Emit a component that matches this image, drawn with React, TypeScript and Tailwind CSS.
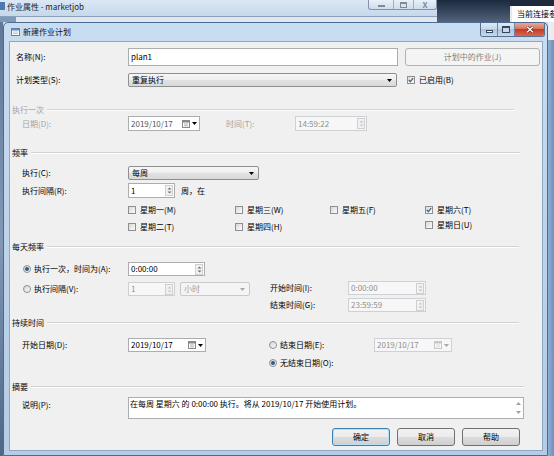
import React from 'react';

const dis = 'text-[#a3a3a3]';

function Caret({ disabled }: { disabled?: boolean }) {
  return (
    <svg width="5" height="3" viewBox="0 0 5 3" className="shrink-0">
      <path d="M0 0H5L2.5 3Z" fill={disabled ? '#a8a8a8' : '#000'} />
    </svg>
  );
}

function Spin({ disabled }: { disabled?: boolean }) {
  const c = disabled ? '#c4c4c4' : '#6f6f6f';
  return (
    <div className="ml-auto mr-[1px] flex h-[11px] w-[8px] shrink-0 items-center justify-center border border-[#cfcfcf] bg-[#f2f2f2]">
      <svg width="5" height="9" viewBox="0 0 5 9">
        <path d="M2.5 1.5L4.5 3.5H0.5Z" fill={c} />
        <path d="M2.5 7.5L4.5 5.5H0.5Z" fill={c} />
      </svg>
    </div>
  );
}

function Cal({ disabled }: { disabled?: boolean }) {
  const c = disabled ? '#c8c8c8' : '#8a8a8a';
  return (
    <div className="ml-auto mr-[2px] flex shrink-0 items-center gap-[2px]">
      <svg width="8" height="8" viewBox="0 0 8 8">
        <rect x="0.5" y="0.5" width="7" height="7" fill="#fafafa" stroke={c} />
        <rect x="1" y="1" width="6" height="1.5" fill={c} />
        <path d="M2 4H6M2 5.8H6" stroke={c} strokeWidth="0.6" />
      </svg>
      <Caret disabled={disabled} />
    </div>
  );
}

function Field({
  cls,
  value,
  disabled,
  spin,
  cal,
}: {
  cls: string;
  value: string;
  disabled?: boolean;
  spin?: boolean;
  cal?: boolean;
}) {
  return (
    <div
      className={`flex items-center border pl-[2px] ${
        disabled ? 'border-[#cdd0d4] bg-[#f7f7f7] text-[#8f8f8f]' : 'border-[#abadb3] bg-white'
      } ${cls}`}
    >
      <span>{value}</span>
      {spin && <Spin disabled={disabled} />}
      {cal && <Cal disabled={disabled} />}
    </div>
  );
}

function Combo({ cls, value, disabled }: { cls: string; value: string; disabled?: boolean }) {
  return (
    <div
      className={`flex items-center justify-between rounded-[2px] border pl-[3px] pr-[4px] ${
        disabled
          ? 'border-[#c9c9c9] bg-[#f4f4f4] text-[#a0a0a0]'
          : 'border-[#8e8f8f] bg-[linear-gradient(#f6f6f6,#eeeeee_50%,#e2e2e2_50%,#d9d9d9)]'
      } ${cls}`}
    >
      <span>{value}</span>
      <Caret disabled={disabled} />
    </div>
  );
}

function Check({ label, checked }: { label: string; checked?: boolean }) {
  return (
    <div className="flex items-center">
      <div className="flex h-[8px] w-[8px] shrink-0 items-center justify-center border border-[#8f8f8f] bg-linear-to-br from-[#d9d9d9] to-[#fbfbfb]">
        {checked && (
          <svg width="6" height="6" viewBox="0 0 6 6">
            <path d="M0.8 3L2.4 4.6L5.2 1.2" stroke="#3a5a84" strokeWidth="1.2" fill="none" />
          </svg>
        )}
      </div>
      <span className="ml-[4px]">{label}</span>
    </div>
  );
}

function Radio({ label, checked }: { label: string; checked?: boolean }) {
  return (
    <div className="flex items-center">
      <div className="flex h-[8px] w-[8px] shrink-0 items-center justify-center rounded-full border border-[#8f8f8f] bg-linear-to-br from-[#d6d6d6] to-[#fafafa]">
        {checked && <div className="h-[4px] w-[4px] rounded-full bg-[#2c5d88]" />}
      </div>
      <span className="ml-[3px]">{label}</span>
    </div>
  );
}

function Hdr({ title, disabled, mr }: { title: string; disabled?: boolean; mr: string }) {
  return (
    <div className="flex h-[10px] items-center pl-[2px]">
      <span className={disabled ? dis : ''}>{title}</span>
      <div className={`ml-[3px] h-[2px] flex-1 border-y border-t-[#cfd3d7] border-b-white ${mr}`} />
    </div>
  );
}

function Btn({ children, def }: { children: React.ReactNode; def?: boolean }) {
  return (
    <div
      className={`flex h-[18px] w-[58px] items-center justify-center rounded-[3px] border bg-[linear-gradient(#f2f2f2,#ebebeb_50%,#dddddd_50%,#cfcfcf)] ${
        def ? 'border-[#3c7fb1] shadow-[inset_0_0_0_1px_#b5e1fb]' : 'border-[#707070]'
      }`}
    >
      {children}
    </div>
  );
}

export default function App() {
  return (
    <div className="relative h-[456px] w-[554px] overflow-hidden whitespace-nowrap bg-[#f0f0f0] font-['Noto_Sans_CJK_SC',sans-serif] text-[8px] leading-none text-black">
      {/* parent window behind */}
      <div className="flex h-full flex-col">
        <div className="flex h-[22px]">
          <div className="flex w-[437px] flex-col">
            <div className="flex h-[16px] items-start bg-linear-to-b from-[#dbe7f4] to-[#c6d8ec]">
              <div className="mt-[2px] h-[8px] w-[5px] bg-[#4d78b2]" />
              <span className="ml-[2px] mt-[3px] text-[#1b1b1b]">作业属性 - marketjob</span>
              <div className="ml-auto flex h-[10px] overflow-hidden rounded-b-[3px] border border-t-0 border-[#8093ab] bg-linear-to-b from-[#e9f0f8] to-[#cfdcea]">
                <div className="flex w-[25px] items-center justify-center border-r border-[#9fb0c4]">
                  <div className="mt-[3px] h-[2px] w-[7px] bg-[#7d8a99]" />
                </div>
                <div className="flex w-[20px] items-center justify-center border-r border-[#9fb0c4]">
                  <div className="h-[6px] w-[7px] border border-t-2 border-[#7d8a99]" />
                </div>
                <div className="flex w-[22px] items-center justify-center text-[8px] font-bold text-[#7d8a99]">
                  X
                </div>
              </div>
            </div>
            <div className="flex h-[6px] border-t border-[#8a9fba] bg-[#e1e6ec]">
              <div className="w-[16px] bg-[#7f9ab9]" />
            </div>
          </div>
          <div className="w-[73px] bg-linear-to-b from-[#1b2a3e] to-[#53637a]" />
          <div className="flex flex-1 flex-col overflow-hidden">
            <div className="h-[6px] bg-[#1c2a3c]" />
            <div className="flex flex-1 items-center border-l-2 border-[#e8e8e8] bg-white pl-[5px]">当前连接参</div>
          </div>
        </div>
        <div className="flex flex-1">
          <div className="w-[3px] bg-linear-to-b from-[#5f7898] via-[#8299b5] to-[#4f6787]" />
          <div className="flex-1 bg-[#c9dbee]" />
          <div className="flex w-[6px] flex-col">
            <div className="h-[18px] bg-[#e9edf2]" />
            <div className="flex-1 bg-linear-to-r from-[#8fb0d6] to-[#6d8fb9]" />
          </div>
        </div>
      </div>

      {/* dialog window */}
      <div className="absolute left-[3px] top-[22px] flex h-[434px] w-[545px] flex-col rounded-t-[5px] border border-[#4b6b93] bg-linear-to-b from-[#c9ddf2] via-[#bdd3eb] to-[#b5cce6]">
        <div className="relative flex h-[18px] items-center">
          <svg width="9" height="8" viewBox="0 0 9 8" className="ml-[7px]">
            <rect x="0.5" y="0.5" width="8" height="7" fill="#fff" stroke="#6a7f99" />
            <rect x="1" y="1" width="7" height="1.5" fill="#5b8ac4" />
            <path d="M2 4H7M2 5.6H7" stroke="#8aa0ba" strokeWidth="0.6" />
          </svg>
          <span className="ml-[3px] text-[#111]">新建作业计划</span>
          <div className="absolute right-[2px] top-0 flex h-[14px] overflow-hidden rounded-b-[3px] border border-t-0 border-[#5a6f8b]">
            <div className="flex w-[17px] items-center justify-center border-r border-[#6f86a5] bg-[linear-gradient(#dfeaf6,#c4d6ea_50%,#aec4de_50%,#c5d9ee)]">
              <div className="mt-[4px] h-[3px] w-[7px] border border-[#34465c] bg-white" />
            </div>
            <div className="flex w-[17px] items-center justify-center border-r border-[#6f86a5] bg-[linear-gradient(#dfeaf6,#c4d6ea_50%,#aec4de_50%,#c5d9ee)]">
              <div className="h-[7px] w-[8px] border border-t-2 border-[#34465c] bg-[#c8d8ea]" />
            </div>
            <div className="flex w-[29px] items-center justify-center bg-[linear-gradient(#e9a99b,#d66c58_50%,#c33d25_50%,#d9664c)]">
              <svg width="8" height="7" viewBox="0 0 8 7">
                <path d="M1 0.8L7 6.2M7 0.8L1 6.2" stroke="#5a1d12" strokeWidth="2.4" />
                <path d="M1 0.8L7 6.2M7 0.8L1 6.2" stroke="#fff" strokeWidth="1.4" />
              </svg>
            </div>
          </div>
        </div>

        <div className="ml-[5px] mr-[4px] flex h-[410px] flex-col border border-[#8fa6c2] bg-[#f0f0f0]">
          {/* 名称 */}
          <div className="mt-[6px] flex h-[18px] items-center">
            <span className="w-[118px] pl-[6px]">名称(N):</span>
            <Field cls="h-[18px] w-[270px]" value="plan1" />
            <div className="ml-[7px] flex h-[18px] w-[135px] items-center justify-center rounded-[3px] border border-[#adb2b5] bg-[#f4f4f4] text-[#838383]">
              计划中的作业(J)
            </div>
          </div>

          {/* 计划类型 */}
          <div className="mt-[7px] flex h-[14px] items-center">
            <span className="w-[118px] pl-[6px]">计划类型(S):</span>
            <Combo cls="h-[14px] w-[269px]" value="重复执行" />
            <div className="ml-[10px]">
              <Check label="已启用(B)" checked />
            </div>
          </div>

          {/* 执行一次 */}
          <div className="mt-[18px]">
            <Hdr title="执行一次" disabled mr="mr-[28px]" />
          </div>
          <div className="mt-[1px] flex h-[15px] items-center">
            <span className={`w-[118px] pl-[12px] ${dis}`}>日期(D):</span>
            <Field cls="h-[15px] w-[72px] text-[#555]" value="2019/10/17" cal />
            <span className={`ml-[26px] w-[69px] ${dis}`}>时间(T):</span>
            <Field cls="h-[15px] w-[72px]" value="14:59:22" disabled spin />
          </div>

          {/* 频率 */}
          <div className="mt-[17px]">
            <Hdr title="频率" mr="mr-[22px]" />
          </div>
          <div className="mt-[8px] flex h-[14px] items-center">
            <span className="w-[118px] pl-[12px]">执行(C):</span>
            <Combo cls="h-[14px] w-[131px]" value="每周" />
          </div>
          <div className="mt-[3px] flex h-[15px] items-center">
            <span className="w-[118px] pl-[12px]">执行间隔(R):</span>
            <Field cls="h-[15px] w-[47px]" value="1" spin />
            <span className="ml-[6px]">周，在</span>
          </div>
          <div className="mt-[6px] flex h-[12px] items-center pl-[118px]">
            <div className="w-[107px]">
              <Check label="星期一(M)" />
            </div>
            <div className="w-[95px]">
              <Check label="星期三(W)" />
            </div>
            <div className="w-[95px]">
              <Check label="星期五(F)" />
            </div>
            <Check label="星期六(T)" checked />
          </div>
          <div className="mt-[5px] flex h-[12px] items-center pl-[118px]">
            <div className="w-[107px]">
              <Check label="星期二(T)" />
            </div>
            <div className="w-[95px]">
              <Check label="星期四(H)" />
            </div>
            <div className="w-[95px]" />
            <div className="mb-[4px]">
              <Check label="星期日(U)" />
            </div>
          </div>

          {/* 每天频率 */}
          <div className="mt-[9px]">
            <Hdr title="每天频率" mr="mr-[23px]" />
          </div>
          <div className="mt-[10px] flex h-[14px] items-center">
            <div className="w-[118px] pl-[13px]">
              <Radio label="执行一次，时间为(A):" checked />
            </div>
            <Field cls="h-[14px] w-[77px]" value="0:00:00" spin />
          </div>
          <div className="mt-[5px] flex">
            <div className="mt-[1px] flex h-[14px] items-center">
              <div className="w-[118px] pl-[13px]">
                <Radio label="执行间隔(V):" />
              </div>
              <Field cls="h-[14px] w-[47px]" value="1" disabled spin />
              <Combo cls="ml-[5px] h-[14px] w-[70px]" value="小时" disabled />
            </div>
            <div className="ml-[20px] flex flex-col">
              <div className="flex h-[14px] items-center">
                <span className="w-[78px]">开始时间(I):</span>
                <Field cls="h-[14px] w-[78px]" value="0:00:00" disabled spin />
              </div>
              <div className="mt-[3px] flex h-[14px] items-center">
                <span className="w-[78px]">结束时间(G):</span>
                <Field cls="h-[14px] w-[78px]" value="23:59:59" disabled spin />
              </div>
            </div>
          </div>

          {/* 持续时间 */}
          <div className="mt-[6px]">
            <Hdr title="持续时间" mr="mr-[23px]" />
          </div>
          <div className="mt-[10px] flex h-[14px] items-center">
            <span className="w-[118px] pl-[12px]">开始日期(D):</span>
            <Field cls="h-[14px] w-[78px]" value="2019/10/17" cal />
            <div className="ml-[63px] w-[105px]">
              <Radio label="结束日期(E):" />
            </div>
            <Field cls="h-[14px] w-[78px]" value="2019/10/17" disabled cal />
          </div>
          <div className="mt-[5px] flex h-[12px] items-center pl-[259px]">
            <Radio label="无结束日期(O):" checked />
          </div>

          {/* 摘要 */}
          <div className="mt-[13px]">
            <Hdr title="摘要" mr="mr-[18px]" />
          </div>
          <div className="mt-[5px] flex h-[22px] items-start">
            <span className="w-[118px] pl-[12px] pt-[4px]">说明(P):</span>
            <div className="flex h-[22px] w-[396px] border border-[#abadb3] bg-white">
              <span className="flex-1 pl-[1px] pt-[2px]">在每周 星期六 的 0:00:00 执行。将从 2019/10/17 开始使用计划。</span>
              <div className="flex w-[9px] flex-col items-center justify-between py-[4px]">
                <svg width="5" height="3" viewBox="0 0 5 3">
                  <path d="M2.5 0L5 3H0Z" fill="#a0a0a0" />
                </svg>
                <svg width="5" height="3" viewBox="0 0 5 3">
                  <path d="M0 0H5L2.5 3Z" fill="#a0a0a0" />
                </svg>
              </div>
            </div>
          </div>

          {/* buttons */}
          <div className="mt-[9px] flex h-[18px] justify-end gap-[7px] pr-[22px]">
            <Btn def>确定</Btn>
            <Btn>取消</Btn>
            <Btn>帮助</Btn>
          </div>
        </div>
      </div>
    </div>
  );
}
